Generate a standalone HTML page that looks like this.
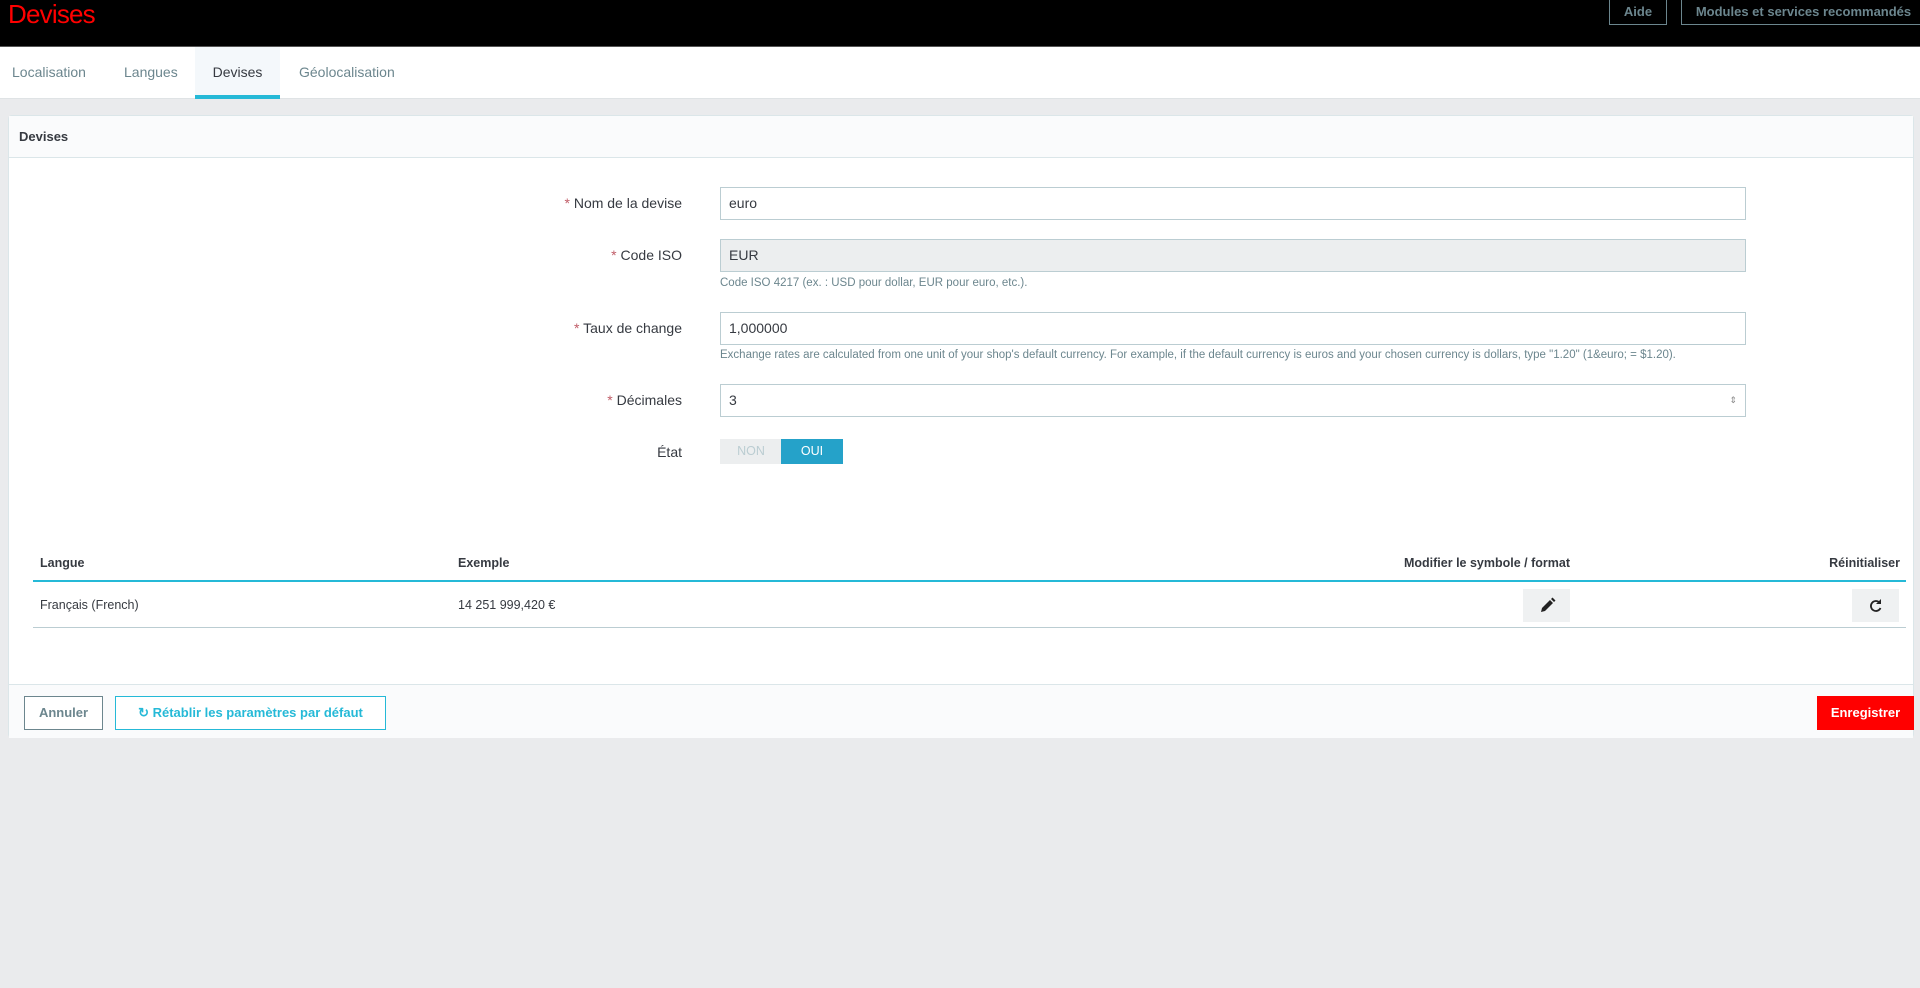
<!DOCTYPE html>
<html><head><meta charset="utf-8"><style>
*{box-sizing:border-box;margin:0;padding:0}
body{width:1920px;height:988px;background:#eaebed;font-family:"Liberation Sans",sans-serif;color:#363a41;position:relative;overflow:hidden;font-size:14px}
.a{position:absolute}
#hd{left:0;top:0;width:1920px;height:47px;background:#000;border-bottom:1px solid #555}
#title{left:8px;top:-1px;color:#f00;font-size:26px;letter-spacing:-0.8px}
.hb{top:-1px;height:26px;border:1px solid #6c868e;color:#6c868e;font-weight:bold;font-size:13px;line-height:24px;text-align:center}
#tabs{left:0;top:47px;width:1920px;height:52px;background:#fff;border-bottom:1px solid #dfe3e5}
.tab{top:0;height:52px;line-height:50px;color:#6c868e;font-size:14px}
#panel{left:8px;top:115px;width:1906px;height:623px;background:#fff;border:1px solid #dbe6e9;border-radius:4px}
#ph{left:0;top:0;width:100%;height:42px;background:#fafbfc;border-bottom:1px solid #dbe6e9;line-height:42px;padding-left:10px;font-size:13px;font-weight:bold;color:#363a41}
.lb{width:300px;text-align:right;font-size:14px;color:#363a41}
.lb b{color:#c05c67;font-weight:normal}
.in{left:711px;width:1026px;height:33px;border:1px solid #bbcdd2;padding-left:8px;line-height:31px;font-size:14px}
.help{left:711px;font-size:11.5px;color:#6c868e}
.th{font-weight:bold;font-size:12.5px}
.ib{height:33px;background:#eff1f2;width:47px}
#ft{left:0;top:568px;width:100%;height:54px;background:#fafbfc;border-top:1px solid #dbe6e9}
</style></head><body>
<div id="hd" class="a">
<div id="title" class="a">Devises</div>
<div class="a hb" style="left:1609px;width:58px">Aide</div>
<div class="a hb" style="left:1681px;width:245px">Modules et services recommandés</div>
</div>
<div id="tabs" class="a">
<div class="a tab" style="left:12px">Localisation</div>
<div class="a tab" style="left:124px">Langues</div>
<div class="a tab" style="left:195px;width:85px;background:#f4f8fb;text-align:center;color:#363a41;border-bottom:4px solid #25b9d7">Devises</div>
<div class="a tab" style="left:299px">Géolocalisation</div>
</div>
<div id="panel" class="a">
<div id="ph" class="a">Devises</div>
<div class="a lb" style="left:373px;top:79px"><b>*</b> Nom de la devise</div>
<div class="a in" style="top:71px">euro</div>
<div class="a lb" style="left:373px;top:131px"><b>*</b> Code ISO</div>
<div class="a in" style="top:123px;background:#eceeef">EUR</div>
<div class="a help" style="top:161px">Code ISO 4217 (ex. : USD pour dollar, EUR pour euro, etc.).</div>
<div class="a lb" style="left:373px;top:204px"><b>*</b> Taux de change</div>
<div class="a in" style="top:196px">1,000000</div>
<div class="a help" style="top:233px">Exchange rates are calculated from one unit of your shop's default currency. For example, if the default currency is euros and your chosen currency is dollars, type "1.20" (1&amp;euro; = $1.20).</div>
<div class="a lb" style="left:373px;top:276px"><b>*</b> Décimales</div>
<div class="a in" style="top:268px">3<span style="position:absolute;right:8px;top:0;font-size:9px;color:#888">⇕</span></div>
<div class="a lb" style="left:373px;top:328px">État</div>
<div class="a" style="left:711px;top:323px;width:62px;height:25px;background:#eceeef;color:#bbcdd2;font-size:12.5px;text-align:center;line-height:25px">NON</div>
<div class="a" style="left:772px;top:323px;width:62px;height:25px;background:#25a2c9;color:#fff;font-size:12.5px;text-align:center;line-height:25px">OUI</div>
<div class="a th" style="left:31px;top:440px">Langue</div>
<div class="a th" style="left:449px;top:440px">Exemple</div>
<div class="a th" style="left:1261px;width:300px;text-align:right;top:440px">Modifier le symbole / format</div>
<div class="a th" style="left:1591px;width:300px;text-align:right;top:440px">Réinitialiser</div>
<div class="a" style="left:24px;top:464px;width:1873px;height:2px;background:#25b9d7"></div>
<div class="a" style="left:31px;top:482px;font-size:12.5px">Français (French)</div>
<div class="a" style="left:449px;top:482px;font-size:12.5px">14 251 999,420 €</div>
<div class="a ib" style="left:1514px;top:473px"><svg width="47" height="33"><path d="M18 23l1-4 8-8 3 3-8 8z M28 10l1.5-1.5 3 3L31 13z" fill="#222"/></svg></div>
<div class="a ib" style="left:1843px;top:473px"><svg width="47" height="33"><path d="M27.5 13.5A5 5 0 1 0 28.5 19" fill="none" stroke="#222" stroke-width="1.8"/><path d="M29 10v5h-5z" fill="#222"/></svg></div>
<div class="a" style="left:24px;top:511px;width:1873px;height:1px;background:#bbcdd2"></div>
<div id="ft" class="a">
<div class="a" style="left:15px;top:11px;width:79px;height:34px;border:1px solid #6c868e;color:#6c868e;font-weight:bold;font-size:13px;text-align:center;line-height:32px;background:#fff">Annuler</div>
<div class="a" style="left:106px;top:11px;width:271px;height:34px;border:1px solid #25b9d7;color:#25b9d7;font-weight:bold;font-size:13px;text-align:center;line-height:32px;background:#fff">↻ Rétablir les paramètres par défaut</div>
<div class="a" style="left:1808px;top:11px;width:97px;height:34px;background:#f00;color:#fff;font-weight:bold;font-size:13px;text-align:center;line-height:34px">Enregistrer</div>
</div>
</div>
</body></html>
